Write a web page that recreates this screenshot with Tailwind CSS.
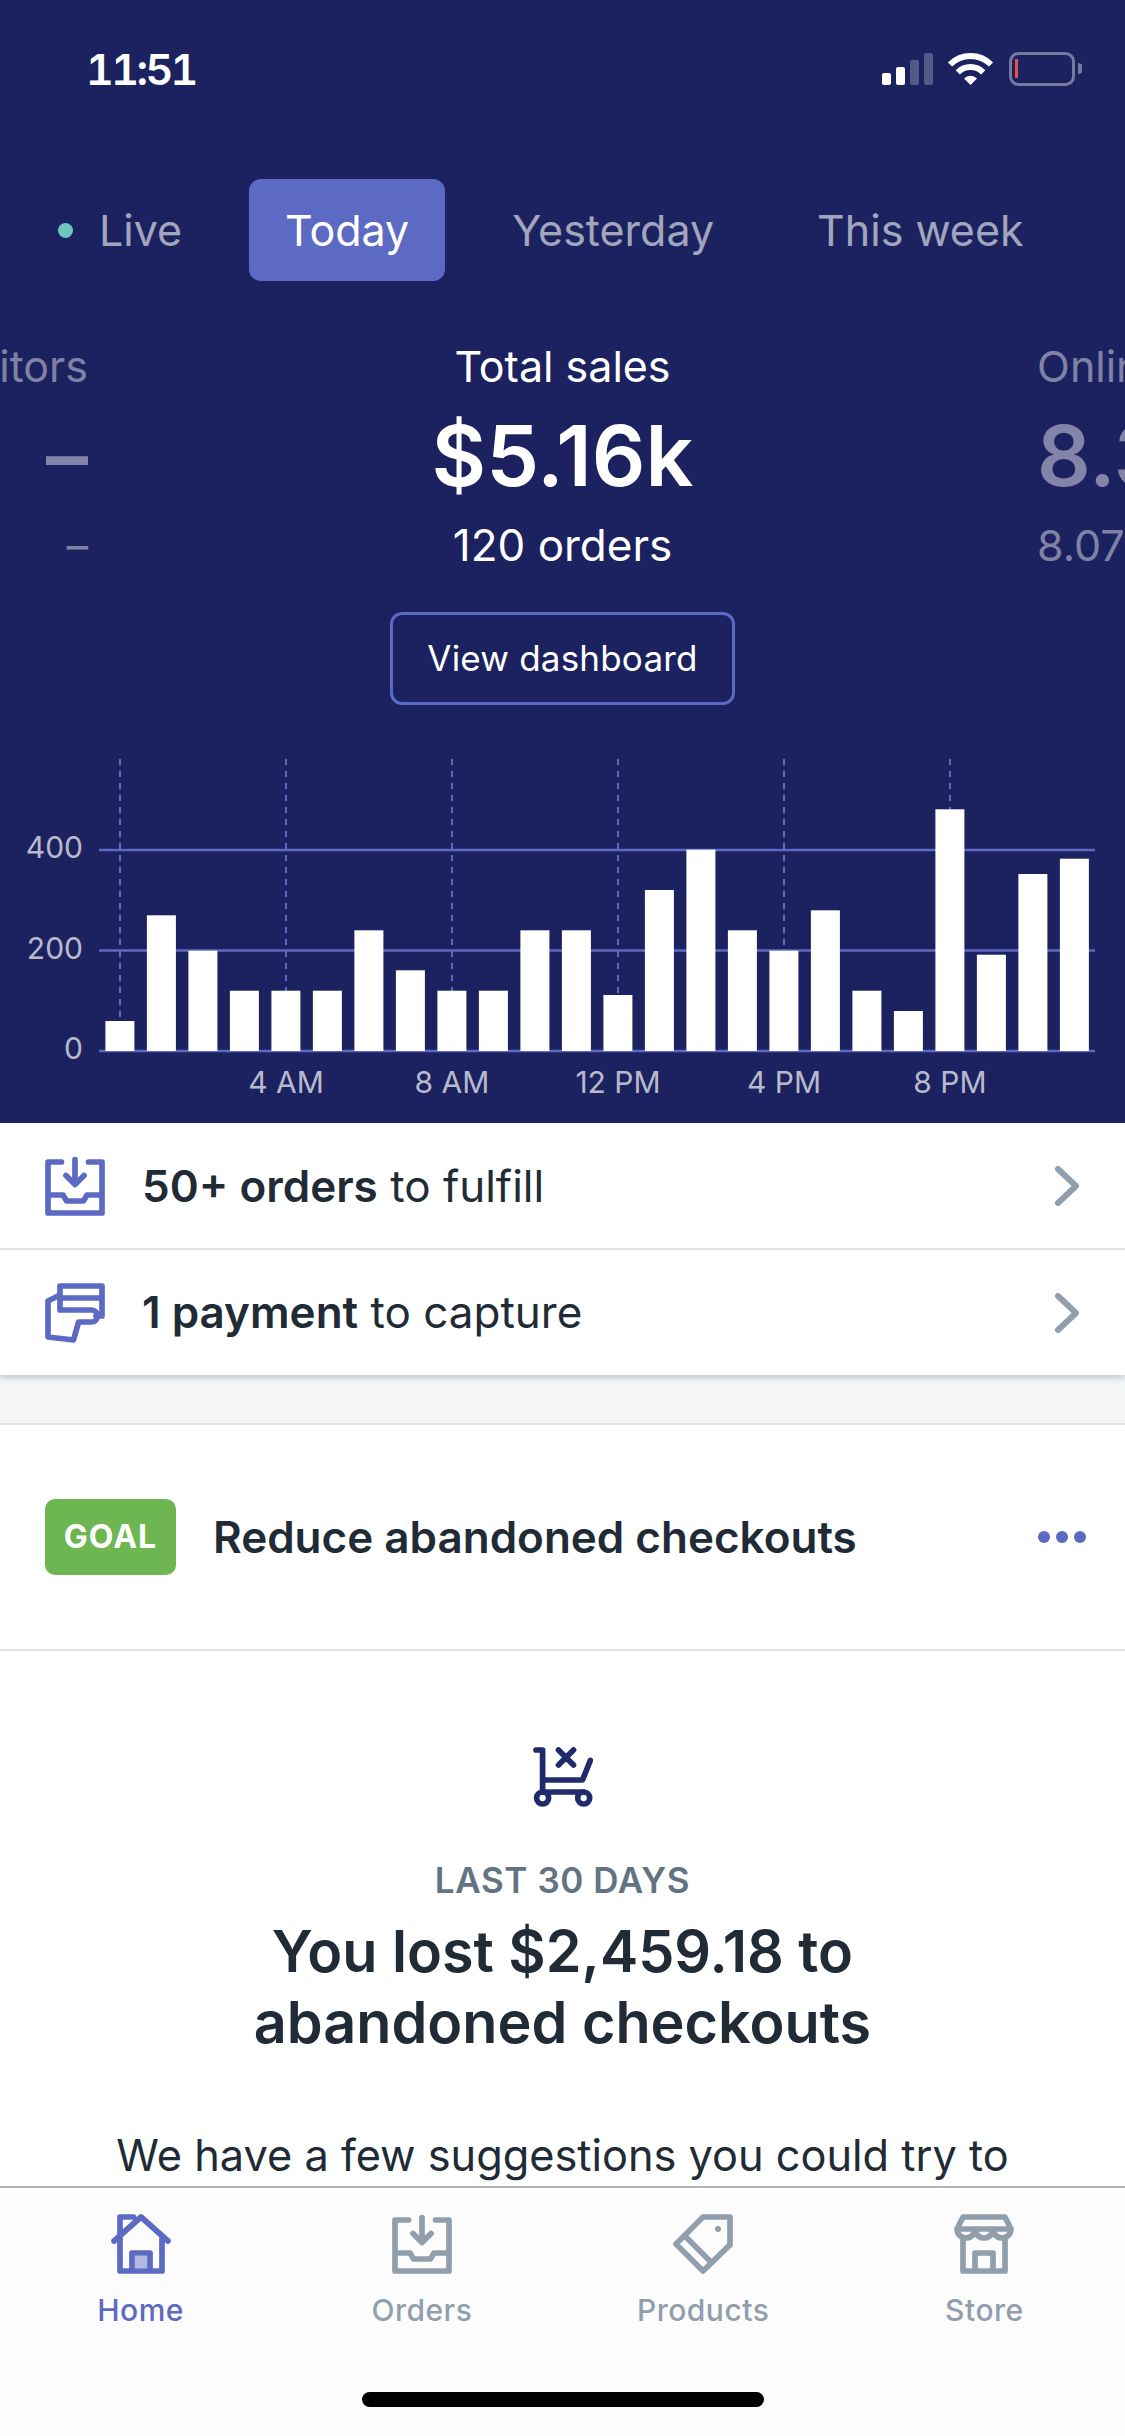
<!DOCTYPE html>
<html lang="en">
<head>
<meta charset="utf-8">
<title>Home</title>
<script src="https://cdn.jsdelivr.net/npm/@tailwindcss/browser@4"></script>
</head>
<body class="m-0 bg-white">
<div class="w-[1125px] h-[2436px] flex flex-col overflow-hidden font-['Inter',sans-serif] text-[#212b36]">
  <main class="flex-1 min-h-0 overflow-hidden">
    <section class="h-[1123px] bg-[#1c2260] text-white flex flex-col overflow-hidden">
      <div class="h-[137px] flex items-start justify-between pl-[86px] pr-[43px] pt-[52px]">
        <span class="text-[43px] leading-[34px] font-semibold tabular-nums tracking-[-2.600px]">11:51</span>
        <svg class="w-[200px] h-[34px]" viewBox="0 0 200 34" fill="none">
          <rect x="0" y="21" width="9" height="12" rx="2" fill="#fff"/>
          <rect x="14" y="15" width="9" height="18" rx="2" fill="#fff"/>
          <rect x="28" y="8" width="9" height="25" rx="2" fill="#fff" fill-opacity=".25"/>
          <rect x="42" y="1" width="9" height="32" rx="2" fill="#fff" fill-opacity=".25"/>
          <path d="M68 12.500A29 29 0 0 1 109 12.500" stroke="#fff" stroke-width="6"/>
          <path d="M75.800 20.300A18 18 0 0 1 101.200 20.300" stroke="#fff" stroke-width="6"/>
          <path d="M88.500 33L82 26.500A9 9 0 0 1 95 26.500Z" fill="#fff"/>
          <rect x="128.500" y="1.500" width="63" height="31" rx="8" stroke="#fff" stroke-opacity=".4" stroke-width="3"/>
          <rect x="133" y="7" width="3" height="19" fill="#e8503f"/>
          <path d="M196 11a5.500 5.500 0 0 1 0 11z" fill="#fff" fill-opacity=".4"/>
        </svg>
      </div>
      <nav class="h-[102px] mt-[42px] flex items-center gap-[31px] pl-[22px] text-[43px] text-white/60 whitespace-nowrap">
        <div class="w-[196px] pl-[36px] flex items-center gap-[26px]"><span class="w-[15px] h-[15px] rounded-full bg-[#6fc6bd]"></span><span>Live</span></div>
        <div class="h-[102px] px-[36px] flex items-center rounded-[12px] bg-[#5c6ac4] text-white">Today</div>
        <div class="px-[36px]">Yesterday</div>
        <div class="px-[36px]">This week</div>
      </nav>
      <div class="grid grid-cols-[88px_1fr_88px] mt-[58px] h-[234px] whitespace-nowrap">
        <div class="flex flex-col items-end text-white/45">
          <span class="h-[54px] leading-[54px] text-[43px]">Visitors</span>
          <span class="h-[125px] leading-[125px] text-[84px] font-semibold">–</span>
          <span class="h-[55px] leading-[55px] text-[43px]">–</span>
        </div>
        <div class="flex flex-col items-center">
          <span class="h-[54px] leading-[54px] text-[43px]">Total sales</span>
          <span class="h-[125px] leading-[125px] text-[84px] font-semibold">$5.16k</span>
          <span class="h-[55px] leading-[55px] text-[44px]">120 orders</span>
        </div>
        <div class="flex flex-col items-start text-white/45">
          <span class="h-[54px] leading-[54px] text-[43px]">Online store</span>
          <span class="h-[125px] leading-[125px] text-[84px] font-semibold">8.3%</span>
          <span class="h-[55px] leading-[55px] text-[43px]">8.07%</span>
        </div>
      </div>
      <div class="flex justify-center mt-[39px]">
        <div class="w-[345px] h-[93px] rounded-[12px] border-[3px] border-[#5c6ac4] flex items-center justify-center text-[35px] tracking-[0.2px]">View dashboard</div>
      </div>
      <svg class="mt-[49px] w-[1125px] h-[369px]" viewBox="0 754 1125 369" fill="none">
        <g stroke="#5c6ac4" stroke-width="2" stroke-dasharray="6 6">
          <path d="M120 759V1051M286 759V1051M452 759V1051M618 759V1051M784 759V1051M950 759V1051"/>
        </g>
        <g stroke="#5c6ac4" stroke-width="2.500">
          <path d="M99 850H1095M99 950.500H1095M99 1051H1095"/>
        </g>
        <g fill="#fff">
          <rect x="105.400" y="1021" width="29" height="30"/>
          <rect x="146.900" y="915.300" width="29" height="135.700"/>
          <rect x="188.400" y="950.700" width="29" height="100.300"/>
          <rect x="229.900" y="990.700" width="29" height="60.300"/>
          <rect x="271.400" y="990.700" width="29" height="60.300"/>
          <rect x="312.900" y="990.700" width="29" height="60.300"/>
          <rect x="354.400" y="930.300" width="29" height="120.700"/>
          <rect x="395.900" y="970.300" width="29" height="80.700"/>
          <rect x="437.400" y="990.700" width="29" height="60.300"/>
          <rect x="478.900" y="990.700" width="29" height="60.300"/>
          <rect x="520.400" y="930.300" width="29" height="120.700"/>
          <rect x="561.900" y="930.300" width="29" height="120.700"/>
          <rect x="603.400" y="995" width="29" height="56"/>
          <rect x="644.900" y="890" width="29" height="161"/>
          <rect x="686.400" y="849.700" width="29" height="201.300"/>
          <rect x="727.900" y="930.300" width="29" height="120.700"/>
          <rect x="769.400" y="950.700" width="29" height="100.300"/>
          <rect x="810.900" y="910.300" width="29" height="140.700"/>
          <rect x="852.400" y="990.700" width="29" height="60.300"/>
          <rect x="893.900" y="1011" width="29" height="40"/>
          <rect x="935.400" y="809.300" width="29" height="241.700"/>
          <rect x="976.900" y="954.700" width="29" height="96.300"/>
          <rect x="1018.400" y="874" width="29" height="177"/>
          <rect x="1059.900" y="858.700" width="29" height="192.300"/>
        </g>
        <g class="fill-white/70 text-[30px]" font-family="Inter, sans-serif">
          <text x="83" y="858" text-anchor="end">400</text>
          <text x="83" y="959" text-anchor="end">200</text>
          <text x="83" y="1059" text-anchor="end">0</text>
          <text x="286" y="1093" text-anchor="middle">4 AM</text>
          <text x="452" y="1093" text-anchor="middle">8 AM</text>
          <text x="618" y="1093" text-anchor="middle">12 PM</text>
          <text x="784" y="1093" text-anchor="middle">4 PM</text>
          <text x="950" y="1093" text-anchor="middle">8 PM</text>
        </g>
      </svg>
    </section>

    <section class="shadow-[0_3px_6px_rgba(99,115,129,0.35)] relative bg-white">
      <div class="h-[127px] flex items-center pl-[45px] pr-[45px] border-b-[2px] border-[#dfe3e8]">
        <svg class="w-[60px] h-[60px] shrink-0" viewBox="0 0 20 20" fill="none" stroke="#5c6ac4" stroke-width="1.900" stroke-linecap="round" stroke-linejoin="round">
          <path d="M5.500 2H1v17h18V2h-4.500M10 1.200v8M7 6.500l3 3 3-3M1 13h5l1.200 2h5.600l1.200-2h5"/>
        </svg>
        <p class="ml-[37px] flex-1 text-[44px]"><span class="font-semibold">50+ orders</span> to fulfill</p>
        <svg class="w-[26px] h-[40px]" viewBox="0 0 26 40" fill="none" stroke="#919eab" stroke-width="6" stroke-linecap="round" stroke-linejoin="round"><path d="M4 3l18 17L4 37"/></svg>
      </div>
      <div class="h-[125px] flex items-center pl-[45px] pr-[45px]">
        <svg class="w-[60px] h-[60px] shrink-0" viewBox="0 0 20 20" fill="none" stroke="#5c6ac4" stroke-width="1.900" stroke-linecap="round" stroke-linejoin="round">
          <path d="M5 1h14v10h-2M5 1v8h10.500a2 2 0 0 1 0 4H11.200L9.500 19 1 18V6l4-2M5 5h14"/>
        </svg>
        <p class="ml-[37px] flex-1 text-[44px] -translate-y-[1px]"><span class="font-semibold">1 payment</span> to capture</p>
        <svg class="w-[26px] h-[40px]" viewBox="0 0 26 40" fill="none" stroke="#919eab" stroke-width="6" stroke-linecap="round" stroke-linejoin="round"><path d="M4 3l18 17L4 37"/></svg>
      </div>
    </section>

    <div class="h-[50px] bg-[#f4f6f8] border-b-[2px] border-[#dfe3e8]"></div>

    <section class="h-[226px] flex items-center pl-[45px] pr-[39px] border-b-[2px] border-[#dfe3e8]">
      <span class="w-[131px] h-[76px] rounded-[10px] bg-[#6db651] text-white text-[32px] font-bold tracking-[1px] flex items-center justify-center">GOAL</span>
      <p class="ml-[37px] flex-1 text-[44px] font-semibold">Reduce abandoned checkouts</p>
      <div class="flex gap-[6px]">
        <span class="w-[12px] h-[12px] rounded-full bg-[#5c6ac4]"></span>
        <span class="w-[12px] h-[12px] rounded-full bg-[#5c6ac4]"></span>
        <span class="w-[12px] h-[12px] rounded-full bg-[#5c6ac4]"></span>
      </div>
    </section>

    <section class="flex flex-col items-center pt-[96px] text-center">
      <svg class="w-[60px] h-[60px]" viewBox="0 0 20 20" fill="none" stroke="#212b6b" stroke-width="1.900" stroke-linecap="round" stroke-linejoin="round">
        <path d="M1 1h2.200v14M3.200 11h13.300l2.600-6.500M8.500 1l5 5M13.500 1l-5 5M3.200 15h13.700"/>
        <circle cx="3.200" cy="17" r="2"/>
        <circle cx="16.900" cy="17" r="2"/>
      </svg>
      <p class="mt-[53px] text-[35px] leading-[40px] font-semibold tracking-[0.6px] text-[#637381]">LAST 30 DAYS</p>
      <h2 class="mt-[16px] text-[57.500px] leading-[71px] font-semibold">You lost $2,459.18 to<br>abandoned checkouts</h2>
      <p class="mt-[67px] text-[43.300px] leading-[60px]">We have a few suggestions you could try to</p>
    </section>
  </main>

  <nav class="h-[250px] shrink-0 bg-[#fcfcfc] border-t-[2px] border-[#b3b3b3] flex flex-col">
    <div class="grid grid-cols-4 pt-[26px]">
      <div class="flex flex-col items-center text-[#5c6ac4]">
        <svg class="w-[60px] h-[60px]" viewBox="0 0 20 20" fill="none" stroke="currentColor" stroke-width="1.900" stroke-linecap="round" stroke-linejoin="round">
          <rect x="8" y="14" width="4" height="4" fill="#b3b8e1" stroke="none"/>
          <path d="M1 9l9-8 9 8M3 7.500V19h14V7.500M7 19v-6h6v6M3 7V1h4.500"/>
        </svg>
        <span class="mt-[14px] text-[30px] leading-[44px] font-medium tracking-[0.5px]">Home</span>
      </div>
      <div class="flex flex-col items-center text-[#919eab]">
        <svg class="w-[60px] h-[60px]" viewBox="0 0 20 20" fill="none" stroke="currentColor" stroke-width="1.900" stroke-linecap="round" stroke-linejoin="round">
          <path d="M5.500 2H1v17h18V2h-4.500M10 1.200v8M7 6.500l3 3 3-3M1 13h5l1.200 2h5.600l1.200-2h5"/>
        </svg>
        <span class="mt-[14px] text-[30px] leading-[44px] font-medium tracking-[0.5px]">Orders</span>
      </div>
      <div class="flex flex-col items-center text-[#919eab]">
        <svg class="w-[60px] h-[60px]" viewBox="0 0 20 20" fill="none" stroke="currentColor" stroke-width="1.900" stroke-linecap="round" stroke-linejoin="round">
          <path d="M10 1h9v9.300L10 19 1 10zM3.800 7.200l9 9"/>
          <circle cx="15" cy="5" r="1" fill="currentColor" stroke="none"/>
        </svg>
        <span class="mt-[14px] text-[30px] leading-[44px] font-medium tracking-[0.5px]">Products</span>
      </div>
      <div class="flex flex-col items-center text-[#919eab]">
        <svg class="w-[60px] h-[60px]" viewBox="0 0 20 20" fill="none" stroke="currentColor" stroke-width="1.900" stroke-linecap="round" stroke-linejoin="round">
          <path d="M1 5L3 1H17L19 5H1a3 3 0 0 0 6 0a3 3 0 0 0 6 0a3 3 0 0 0 6 0M3 8.500V19H17V8.500M7 19v-6h6v6"/>
        </svg>
        <span class="mt-[14px] text-[30px] leading-[44px] font-medium tracking-[0.5px]">Store</span>
      </div>
    </div>
    <div class="mt-[60px] mx-auto w-[402px] h-[15px] rounded-full bg-black"></div>
  </nav>
</div>
</body>
</html>
